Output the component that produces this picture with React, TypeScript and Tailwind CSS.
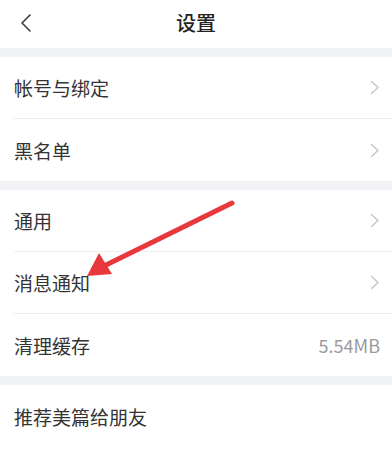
import React from "react";

const Chevron = () => (
  <svg width="10" height="15" viewBox="0 0 10 15" fill="none">
    <path d="M1.5 1.5 L8 7.5 L1.5 13.5" stroke="#c6c6c8" strokeWidth="1.5" strokeLinecap="round" strokeLinejoin="round" />
  </svg>
);

const Row = ({ label, right, divider }: { label: string; right?: React.ReactNode; divider?: boolean }) => (
  <div className="pl-[14px] bg-white">
    <div className={`h-[62px] flex items-center justify-between pr-[12px] ${divider ? "border-b border-[#eeeeee]" : ""}`}>
      <span className="text-[19px] text-[#333333] leading-none">{label}</span>
      {right}
    </div>
  </div>
);

const Gap = () => <div className="h-[9px] bg-[#f1f2f5]" />;

export default function App() {
  return (
    <div
      className="relative w-[392px] h-[449px] overflow-hidden bg-white"
      style={{ fontFamily: '"Noto Sans CJK SC", "Noto Sans", sans-serif' }}
    >
      <div className="h-[48px] flex items-center relative">
        <svg className="absolute left-[19px] top-[14px]" width="14" height="18" viewBox="0 0 14 18" fill="none">
          <path d="M11 1 L3 9 L11 17" stroke="#333333" strokeWidth="1.5" strokeLinecap="round" strokeLinejoin="round" />
        </svg>
        <div className="flex-1 text-center text-[20px] font-medium text-[#222222] leading-none -mt-[2px]">设置</div>
      </div>
      <Gap />
      <Row label="帐号与绑定" divider right={<Chevron />} />
      <Row label="黑名单" right={<Chevron />} />
      <Gap />
      <Row label="通用" divider right={<Chevron />} />
      <Row label="消息通知" divider right={<Chevron />} />
      <Row label="清理缓存" right={<span className="text-[18px] text-[#9a9a9a] leading-none">5.54MB</span>} />
      <Gap />
      <Row label="推荐美篇给朋友" />

      <svg className="absolute left-0 top-0 pointer-events-none" width="392" height="449" viewBox="0 0 392 449">
        <line x1="232" y1="203" x2="104" y2="266" stroke="#e8383b" strokeWidth="5" strokeLinecap="round" />
        <polygon points="87,276 99,253 112,274" fill="#e8383b" />
      </svg>
    </div>
  );
}
